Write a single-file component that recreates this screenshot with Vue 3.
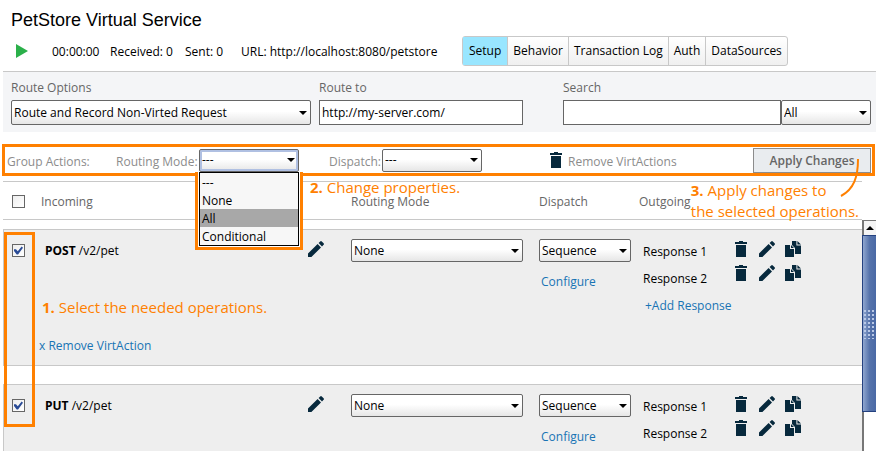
<script setup>
import { ref, reactive } from 'vue'

const tabs = ['Setup', 'Behavior', 'Transaction Log', 'Auth', 'DataSources']
const activeTab = ref('Setup')
const routeTo = ref('http://my-server.com/')
const search = ref('')
const modes = ['---', 'None', 'All', 'Conditional']
const hovered = ref('All')
const operations = reactive([
  { method: 'POST', path: '/v2/pet', checked: true, responses: ['Response 1', 'Response 2'] },
  { method: 'PUT', path: '/v2/pet', checked: true, responses: ['Response 1', 'Response 2'] }
])

const icons = {
  trash: 'M6 0h4v1h4v2H2V1h4zM3 4h10v12H3z',
  pencil: 'M0 12.6 9.6 3l3.4 3.4L3.4 16H0zM10.6 2l1.6-1.6q.8-.8 1.6 0l1.8 1.8q.8.8 0 1.6L14 5.4z',
  copy: 'M0 4h5v4h4v8H0zM6 4l3 3H6zM7 0h4.400v4.600H16V13h-6V7L7 4zM12.400 0 16 3.600h-3.600z'
}
</script>

<template>
  <main class="page">
    <h1 class="title">PetStore Virtual Service</h1>

    <div class="toolbar">
      <button class="run" type="button" aria-label="Run">
        <svg viewBox="0 0 12 14" width="12" height="14"><path d="M0 0 12 7 0 14z" /></svg>
      </button>
      <span class="time">00:00:00</span>
      <span class="received">Received: 0</span>
      <span class="sent">Sent: 0</span>
      <span class="url">URL: http://localhost:8080/petstore</span>
      <nav class="tabs">
        <button
          v-for="tab in tabs"
          :key="tab"
          type="button"
          class="tab"
          :class="{ active: tab === activeTab }"
          @click="activeTab = tab"
        >{{ tab }}</button>
      </nav>
    </div>

    <section class="options">
      <div class="field route">
        <label for="route">Route Options</label>
        <span class="select"><select id="route"><option>Route and Record Non-Virted Request</option></select></span>
      </div>
      <div class="field target">
        <label for="target">Route to</label>
        <input id="target" v-model="routeTo" type="text" />
      </div>
      <div class="field search">
        <label for="search">Search</label>
        <div class="joined">
          <input id="search" v-model="search" type="text" />
          <span class="select scope"><select aria-label="Search scope"><option>All</option></select></span>
        </div>
      </div>
    </section>

    <section class="group">
      <span class="group-name">Group Actions:</span>
      <label class="mode-label" for="group-mode">Routing Mode:</label>
      <div class="mode">
        <span class="select focused"><select id="group-mode"><option>---</option></select></span>
        <div class="popup">
          <ul role="listbox" aria-label="Routing Mode">
            <li
              v-for="mode in modes"
              :key="mode"
              role="option"
              :class="{ hovered: mode === hovered }"
              @mouseenter="hovered = mode"
            >{{ mode }}</li>
          </ul>
        </div>
        <p class="note note-change"><b>2.</b> Change properties.</p>
      </div>
      <label class="dispatch-label" for="group-dispatch">Dispatch:</label>
      <span class="select group-dispatch"><select id="group-dispatch"><option>---</option></select></span>
      <button class="remove-all" type="button">
        <svg class="icon" viewBox="0 0 16 16"><path :d="icons.trash" /></svg>
        <span>Remove VirtActions</span>
      </button>
      <button class="apply" type="button">Apply Changes</button>
      <svg class="pointer" viewBox="0 0 20 42" width="20" height="42"><path d="M18 1C18 19 14 31 1 38" /></svg>
      <p class="note note-apply"><b>3.</b> Apply changes to<br />the selected operations.</p>
    </section>

    <div class="list">
      <table class="operations">
        <thead>
          <tr class="row">
            <th class="check"><input type="checkbox" aria-label="Select all" /></th>
            <th>Incoming</th>
            <th></th>
            <th>Routing Mode</th>
            <th>Dispatch</th>
            <th>Outgoing</th>
          </tr>
        </thead>
        <tbody>
          <tr v-for="op in operations" :key="op.method" class="row card">
            <td class="check"><input v-model="op.checked" type="checkbox" :aria-label="'Select ' + op.method" /></td>
            <td class="incoming">
              <span class="path"><b>{{ op.method }}</b> {{ op.path }}</span>
              <a class="remove" href="#">x Remove VirtAction</a>
            </td>
            <td class="edit">
              <button class="icon-button" type="button" aria-label="Edit">
                <svg class="icon" viewBox="0 0 16 16"><path :d="icons.pencil" /></svg>
              </button>
            </td>
            <td class="routing">
              <span class="select"><select aria-label="Routing mode"><option>None</option></select></span>
            </td>
            <td class="dispatch">
              <span class="select"><select aria-label="Dispatch"><option>Sequence</option></select></span>
              <a href="#">Configure</a>
            </td>
            <td class="outgoing">
              <div class="responses">
                <span v-for="name in op.responses" :key="name">{{ name }}</span>
                <a href="#">+Add Response</a>
              </div>
              <div class="tools">
                <template v-for="name in op.responses" :key="name">
                  <button
                    v-for="(shape, kind) in icons"
                    :key="kind"
                    class="icon-button"
                    type="button"
                    :aria-label="kind + ' ' + name"
                  >
                    <svg class="icon" viewBox="0 0 16 16"><path :d="shape" /></svg>
                  </button>
                </template>
              </div>
            </td>
          </tr>
        </tbody>
      </table>
      <div class="scrollbar">
        <button class="up" type="button" aria-label="Scroll up"></button>
        <div class="thumb"><i class="grip"></i></div>
      </div>
      <div class="selection"></div>
      <p class="note note-select"><b>1.</b> Select the needed operations.</p>
    </div>
  </main>
</template>

<style>
html,
body {
  margin: 0;
  background: #fff;
}
</style>

<style scoped>
.page {
  --accent: #ff8000;
  --navy: #07293d;
  --line: #c8c8c8;
  display: flex;
  flex-direction: column;
  height: 100vh;
  overflow: hidden;
  font: 12px/16px "Open Sans", "Noto Sans", sans-serif;
  color: #000;
}
.page * {
  box-sizing: border-box;
}
button,
input,
select {
  font: inherit;
  color: inherit;
  margin: 0;
  border-radius: 0;
}
button {
  padding: 0;
  border: 0;
  background: none;
}
p,
ul {
  margin: 0;
  padding: 0;
  list-style: none;
}
a {
  color: #1874b4;
  text-decoration: none;
}
.title {
  margin: 0;
  padding: 8px 11px 4px;
  font: 18px/24px "Liberation Sans", Arial, sans-serif;
}

/* status line and tabs */
.toolbar {
  display: flex;
  align-items: center;
  height: 30px;
  margin-bottom: 5px;
  padding-left: 16px;
  white-space: nowrap;
}
.toolbar > span {
  padding-top: 2px;
}
.run {
  display: flex;
  width: 36px;
}
.run svg {
  fill: #2bb04a;
}
.time {
  width: 58px;
}
.received {
  width: 75px;
}
.sent {
  width: 56px;
}
.url {
  width: 221px;
}
.tabs {
  display: flex;
  height: 30px;
  border: 1px solid var(--line);
  border-radius: 3px;
  background: linear-gradient(#fff, #f0f0f0);
}
.tab {
  padding: 0 5px;
}
.tab + .tab {
  border-left: 1px solid var(--line);
}
.tab.active {
  padding: 0 6px;
  background: #99e6ff;
}

/* form controls */
input[type='text'] {
  width: 100%;
  min-width: 0;
  height: 25px;
  padding: 0 2px;
  border: 1px solid #666;
  background: #fff;
}
.select {
  position: relative;
  display: block;
}
.select select {
  display: block;
  width: 100%;
  height: 23px;
  padding: 0 16px 0 2px;
  border: 1px solid #666;
  border-radius: 2px;
  appearance: none;
  background: linear-gradient(#fff 45%, #e6e6e6);
}
.select::after {
  content: '';
  position: absolute;
  top: 50%;
  right: 4px;
  margin-top: -2px;
  border: 4px solid transparent;
  border-top-color: #000;
  border-bottom: 0;
  pointer-events: none;
}
.select.focused select {
  box-shadow: inset 0 0 0 2px #b0c0e2;
}
input[type='checkbox'] {
  display: block;
  width: 13px;
  height: 13px;
  border: 1px solid #666;
  appearance: none;
  background: linear-gradient(135deg, #eee, #fff);
}
input[type='checkbox']:checked::after {
  content: '';
  display: block;
  width: 9px;
  height: 9px;
  margin: 1px;
  background: #2a4b96;
  clip-path: polygon(0 35%, 22% 35%, 42% 58%, 85% 5%, 100% 20%, 45% 95%, 30% 95%, 0 55%);
}

/* routing options */
.options {
  display: grid;
  grid-template-columns: 300fr 212fr 348fr;
  height: 61px;
  margin-left: 3px;
  padding: 8px 5px 0 8px;
  border-top: 1px solid var(--line);
  background: #f4f5f7;
}
.field label {
  display: block;
  margin-bottom: 4px;
  color: #666;
}
.field.target {
  margin-left: 8px;
}
.field.search {
  margin-left: 40px;
}
.options .select select {
  height: 25px;
}
.joined {
  display: flex;
}
.scope {
  flex: 0 0 90px;
}

/* group actions */
.group {
  position: relative;
  display: flex;
  align-items: center;
  height: 32px;
  margin: 12px 1px 5px 2px;
  padding: 0 1px 0 2px;
  border: 3px solid var(--accent);
  color: #8c8c8c;
  white-space: nowrap;
}
.group-name,
.group > label,
.remove-all span {
  padding-top: 3px;
}
.group-name {
  width: 109px;
}
.mode-label {
  width: 83px;
}
.mode {
  position: relative;
  width: 100px;
  color: #000;
}
.popup {
  position: absolute;
  top: 23px;
  left: -4px;
  right: -4px;
  z-index: 2;
  padding: 0 1px 1px;
  border: 3px solid var(--accent);
  border-top: 0;
  background: #fff;
}
.popup ul {
  border: 1px solid #000;
  background: #f7f7f7;
}
.popup li {
  height: 18px;
  padding: 0 2px;
  line-height: 20px;
}
.popup li.hovered {
  background: #a8a8a8;
}
.dispatch-label {
  width: 53px;
  margin-left: 30px;
}
.group-dispatch {
  width: 100px;
  color: #000;
}
.remove-all {
  display: flex;
  align-items: center;
  gap: 4px;
  margin: 0 auto 0 66px;
}
.apply {
  width: 118px;
  height: 25px;
  padding-top: 1px;
  border: 1px solid #8c8c8c;
  background: #e9ecef;
  color: #666;
  font-weight: 600;
}
.pointer {
  position: absolute;
  top: 11px;
  right: 12px;
  z-index: 2;
  fill: none;
  stroke: var(--accent);
  stroke-width: 2;
}
.note {
  position: absolute;
  z-index: 2;
  font-size: 15px;
  line-height: 21px;
  color: var(--accent);
  white-space: nowrap;
}
.note-change {
  top: 28px;
  left: 111px;
}
.note-apply {
  top: 33px;
  right: 13px;
}

/* operations */
.list {
  position: relative;
  display: grid;
  grid-template-columns: minmax(0, 1fr) 14px;
  flex: 1;
  min-height: 0;
  overflow: hidden;
  margin-left: 3px;
}
.operations,
.operations thead,
.operations tbody {
  display: block;
}
.row {
  display: grid;
  grid-template-columns: 42px 263fr 43px 188fr 104px 219fr;
}
th,
td {
  padding: 0;
  text-align: left;
  font-weight: 400;
}
thead .row {
  align-items: center;
  height: 39px;
  margin-bottom: 9px;
  padding-top: 2px;
  border: solid var(--line);
  border-width: 1px 0;
  color: #666;
}
thead th:nth-child(2) {
  margin-left: -4px;
}
.check {
  padding-left: 9px;
}
thead th:last-child {
  margin-left: -4px;
}
.card {
  grid-template-columns: 41px 263fr 43px 188fr 104px 219fr;
  height: 137px;
  margin-bottom: 18px;
  padding-top: 9px;
  border: solid var(--line);
  border-width: 1px 0 1px 1px;
  background: #eee;
}
.card .check {
  padding-top: 5px;
  padding-left: 8px;
}
.incoming {
  display: flex;
  flex-direction: column;
  gap: 79px;
  padding-top: 4px;
}
.incoming b {
  font-weight: 700;
}
.remove {
  margin-left: -6px;
}
.icon {
  display: block;
  width: 16px;
  height: 16px;
  fill: var(--navy);
}
.edit {
  padding-top: 2px;
}
.routing {
  padding-right: 16px;
}
.dispatch {
  padding-right: 12px;
}
.dispatch a {
  display: block;
  padding: 12px 2px;
}
.outgoing {
  display: flex;
}
.responses {
  display: flex;
  flex-direction: column;
  gap: 11px;
  width: 90px;
  padding-top: 5px;
  white-space: nowrap;
}
.responses a {
  padding-left: 2px;
}
.tools {
  display: grid;
  grid-template-columns: repeat(3, 16px);
  align-content: start;
  gap: 8px 10px;
  padding-top: 2px;
}
.scrollbar {
  margin-top: 39px;
  border-left: 2px solid #777;
}
.up {
  display: flex;
  align-items: center;
  justify-content: center;
  width: 100%;
  height: 15px;
  border-top: 1px solid #777;
  background: #f4f4f4;
}
.up::after {
  content: '';
  border: 4px solid transparent;
  border-top: 0;
  border-bottom-color: #000;
}
.thumb {
  display: flex;
  align-items: center;
  height: 177px;
  margin-left: -2px;
  border: 1px solid #24417f;
  border-right: 0;
  background: linear-gradient(90deg, #8fa6cf, #5673ab 50%, #4a69a5);
}
.grip {
  width: 100%;
  height: 30px;
  background: radial-gradient(circle, #b9c8e6 1px, transparent 1px) 0 0 / 4px 4px;
}
.selection {
  position: absolute;
  top: 51px;
  left: 1px;
  width: 31px;
  height: 195px;
  border: 3px solid var(--accent);
}
.note-select {
  top: 116px;
  left: 39px;
}
</style>
